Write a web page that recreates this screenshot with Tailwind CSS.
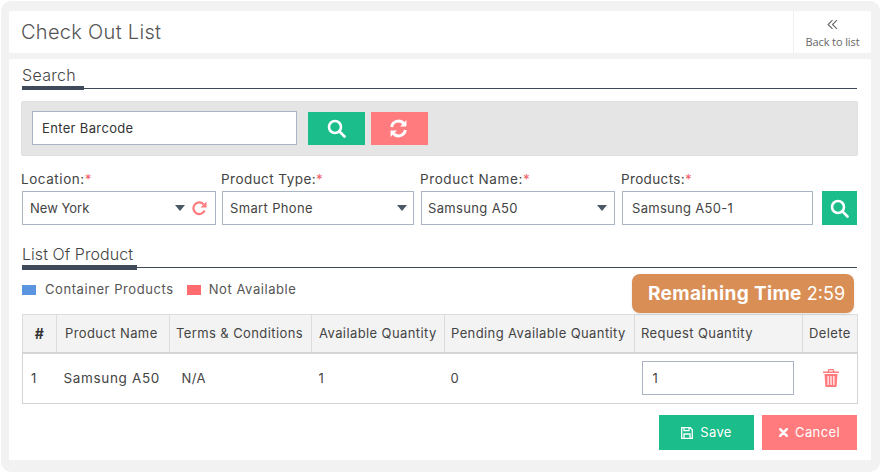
<!doctype html>
<html>
<head>
<meta charset="utf-8">
<script src="https://cdn.jsdelivr.net/npm/@tailwindcss/browser@4"></script>
</head>
<body class="bg-white font-['Inter','Open_Sans',sans-serif] text-[#444] tracking-[0.4px]">
<div class="w-[881px] h-[473px] pt-px pl-px overflow-hidden">
  <div class="w-[879px] h-[471px] rounded-[10px] bg-[#f2f2f2] pt-2.5 pl-2">
    <!-- header -->
    <div class="w-[862px] h-[42px] bg-white flex justify-between">
      <h1 class="pl-3 pt-[7px] text-[20px] font-light tracking-[0.3px] leading-7 text-[#555]">Check Out List</h1>
      <a class="w-[78px] border-l border-[#f0f0f0] flex flex-col items-center pt-[7px] text-[#666]">
        <svg class="w-[11px] h-[11px] mt-px" viewBox="0 0 10 10" fill="none" stroke="#666" stroke-width="1"><path d="M5 1 1 5l4 4M9 1 5 5l4 4"/></svg>
        <span class="font-['Open_Sans'] text-[11px] tracking-[-0.1px] leading-4 mt-[4px]">Back to list</span>
      </a>
    </div>
    <!-- body -->
    <div class="relative w-[862px] h-[401px] mt-1.5 bg-white pl-[13px] pr-[14px]">
      <div class="h-[30px] relative border-b border-[#3c4858]">
        <span class="block pt-[6px] text-[16px] font-light tracking-[0.3px] leading-5 text-[#444]">Search</span>
        <span class="absolute left-0 -bottom-[2px] w-[62px] h-1 bg-[#3f4b5b]"></span>
      </div>
      <div class="-ml-px w-[837px] h-[55px] mt-3 bg-[#e5e5e5] rounded-[2px] border border-[#e0e0e0] pl-[10px] pt-[9px] flex">
        <input class="w-[265px] h-[34px] bg-white border border-[#a9b5c4] pl-[9px] text-[13px] tracking-[0.35px] text-[#333] placeholder:text-[#333]" placeholder="Enter Barcode">
        <button class="ml-[11px] mt-px w-[57px] h-[33px] bg-[#1bbd8a] flex items-center justify-center">
          <svg class="w-[19px] h-[19px]" viewBox="0 0 19 19" fill="none" stroke="#fff" stroke-width="2.6"><circle cx="8" cy="8" r="6"/><path d="m12.5 12.5 5 5" stroke-linecap="round"/></svg>
        </button>
        <button class="ml-[6px] mt-px w-[57px] h-[33px] bg-[#ff7b7d] flex items-center justify-center">
          <svg class="w-[19px] h-[19px] -ml-[2px]" viewBox="0 0 18 18" fill="none" stroke="#fff" stroke-width="2.8"><path d="M2.500 7.500A6.500 6.500 0 0 1 14 4.500"/><path d="M15.500 10.500A6.500 6.500 0 0 1 4 13.500"/><path d="M16.500 1v6h-6z" fill="#fff" stroke="none"/><path d="M1.500 17v-6h6z" fill="#fff" stroke="none"/></svg>
        </button>
      </div>
      <!-- filters -->
      <div class="mt-[13px] flex">
        <div class="w-[200px]">
          <label class="block -ml-px text-[13.5px] tracking-[0.55px] leading-5 text-[#444]">Location:<span class="text-[#f0616a]">*</span></label>
          <div class="mt-[2px] w-[194px] h-[34px] border border-[#a9b5c4] flex items-center pl-[7px] pt-[2px] text-[13px] tracking-normal">
            <span>New York</span>
            <svg class="ml-auto -mt-[2px] w-[10px] h-[6px]" viewBox="0 0 10 6" fill="#4a5764"><path d="M0 0h10L5 6z"/></svg>
            <svg class="ml-[7px] mr-[8px] -mt-[2px] w-[15px] h-[15px]" viewBox="0 0 15 15" fill="none" stroke="#ff7b7d" stroke-width="2.200"><path d="M12.600 9.500A5.800 5.800 0 1 1 11.500 3.300"/><path d="M14.500 0.500v6h-6z" fill="#ff7b7d" stroke="none"/></svg>
          </div>
        </div>
        <div class="w-[199px]">
          <label class="block -ml-px text-[13.5px] tracking-[0.45px] leading-5 text-[#444]">Product Type:<span class="text-[#f0616a]">*</span></label>
          <div class="mt-[2px] w-[192px] h-[34px] border border-[#a9b5c4] flex items-center pl-[7px] pt-[2px] text-[13px] tracking-[0.35px]">
            <span>Smart Phone</span>
            <svg class="ml-auto -mt-[2px] mr-[6px] w-[10px] h-[6px]" viewBox="0 0 10 6" fill="#4a5764"><path d="M0 0h10L5 6z"/></svg>
          </div>
        </div>
        <div class="w-[201px]">
          <label class="block -ml-px text-[13.5px] tracking-[0.6px] leading-5 text-[#444]">Product Name:<span class="text-[#f0616a]">*</span></label>
          <div class="mt-[2px] w-[194px] h-[34px] border border-[#a9b5c4] flex items-center pl-[6px] pt-[2px] text-[13px] tracking-[0.35px]">
            <span>Samsung A50</span>
            <svg class="ml-auto -mt-[2px] mr-[7px] w-[10px] h-[6px]" viewBox="0 0 10 6" fill="#4a5764"><path d="M0 0h10L5 6z"/></svg>
          </div>
        </div>
        <div>
          <label class="block -ml-px text-[13.5px] tracking-[0.35px] leading-5 text-[#444]">Products:<span class="text-[#f0616a]">*</span></label>
          <div class="mt-[2px] flex">
            <div class="w-[191px] h-[34px] border border-[#a9b5c4] flex items-center pl-[9px] pt-[2px] text-[13px] tracking-[0.3px]">Samsung A50-1</div>
            <button class="ml-[9px] w-[35px] h-[34px] bg-[#1bbd8a] flex items-center justify-center">
              <svg class="w-[19px] h-[19px]" viewBox="0 0 19 19" fill="none" stroke="#fff" stroke-width="2.6"><circle cx="8" cy="8" r="6"/><path d="m12.5 12.5 5 5" stroke-linecap="round"/></svg>
            </button>
          </div>
        </div>
      </div>
      <!-- list -->
      <div class="mt-[19px] h-[24px] relative border-b border-[#3c4858]">
        <span class="block text-[16px] font-light tracking-[0.05px] leading-5 text-[#444]">List Of Product</span>
        <span class="absolute left-0 -bottom-[3px] w-[115px] h-[5px] bg-[#3f4b5b]"></span>
      </div>
      <div class="mt-[12px] h-[20px] flex items-center text-[13px] tracking-[0.57px] text-[#555]">
        <span class="w-[14px] h-[10px] bg-[#5b95e0]"></span>
        <span class="ml-[9px]">Container Products</span>
        <span class="ml-[13px] w-[14px] h-[10px] bg-[#ff6b6e]"></span>
        <span class="ml-[8px]">Not Available</span>
      </div>
      <div class="absolute left-[623px] top-[215px] w-[222px] h-[39px] rounded-lg bg-[#d98e56] shadow-sm text-white text-[18px] tracking-normal leading-[39px] pl-[16px] z-10">
        <b class="font-bold text-[19px] tracking-[0.35px]">Remaining Time</b> 2:59
      </div>
      <table class="mt-[14px] w-[835px] table-fixed border-collapse text-[13px] text-[#444]">
        <colgroup>
          <col class="w-[34px]"><col class="w-[113px]"><col class="w-[142px]"><col class="w-[133px]"><col class="w-[190px]"><col class="w-[168px]"><col class="w-[55px]">
        </colgroup>
        <thead>
          <tr class="h-[38px] bg-[#f3f3f3] border-b-2 border-[#d2d4d6]">
            <th class="border border-[#dcdcdc] font-bold text-center text-[#333] text-[14px]">#</th>
            <th class="border border-[#dcdcdc] font-normal text-left pl-[8px]">Product Name</th>
            <th class="border border-[#dcdcdc] font-normal text-left pl-[6px]">Terms &amp; Conditions</th>
            <th class="border border-[#dcdcdc] font-normal text-left pl-[7px]">Available Quantity</th>
            <th class="border border-[#dcdcdc] font-normal text-left pl-[6px]">Pending Available Quantity</th>
            <th class="border border-[#dcdcdc] font-normal text-left pl-[6px]">Request Quantity</th>
            <th class="border border-[#dcdcdc] font-normal text-left pl-[6px]">Delete</th>
          </tr>
        </thead>
        <tbody>
          <tr class="h-[51px] border border-[#d2d4d6]">
            <td class="pl-[8px]">1</td>
            <td class="pl-[7px] text-[13.5px] tracking-[0.65px]">Samsung A50</td>
            <td class="pl-[12px]">N/A</td>
            <td class="pl-[7px]">1</td>
            <td class="pl-[6px]">0</td>
            <td class="pl-[7px]"><div class="w-[152px] h-[34px] border border-[#a9b5c4] flex items-center pl-[10px]">1</div></td>
            <td class="pl-[20px]">
              <svg class="w-[16px] h-[18px]" viewBox="0 0 16 18" fill="#ff7b7d"><path d="M5.500 0h5l1 2.500H16V4H0V2.500h4.500zM6.300 1.200 6 2.500h4l-.3-1.300z"/><path fill-rule="evenodd" d="M1.500 5h13l-.8 12a1 1 0 0 1-1 1H3.300a1 1 0 0 1-1-1zM4.500 7v9h1.200V7zm2.900 0v9h1.200V7zm2.900 0v9h1.200V7z"/></svg>
            </td>
          </tr>
        </tbody>
      </table>
      <div class="mt-[11px] flex justify-end gap-2">
        <button class="w-[95px] h-[35px] bg-[#1bbd8a] text-white text-[13px] flex items-center justify-center gap-[7px]">
          <svg class="w-3 h-3" viewBox="0 0 12 12" fill="none" stroke="#fff" stroke-width="1.300"><path d="M.7.700h8.600l2 2v8.600H.7z"/><path d="M3 .7v3h5v-3M3 11.300V7h6v4.300"/></svg>
          Save
        </button>
        <button class="w-[95px] h-[35px] bg-[#ff7b7d] text-white text-[13px] flex items-center justify-center gap-[7px]">
          <svg class="w-[9px] h-[9px]" viewBox="0 0 9 9" stroke="#fff" stroke-width="2.400" stroke-linecap="round"><path d="m1.200 1.200 6.600 6.600M7.800 1.200 1.200 7.800"/></svg>
          Cancel
        </button>
      </div>
    </div>
  </div>
</div>
</body>
</html>
